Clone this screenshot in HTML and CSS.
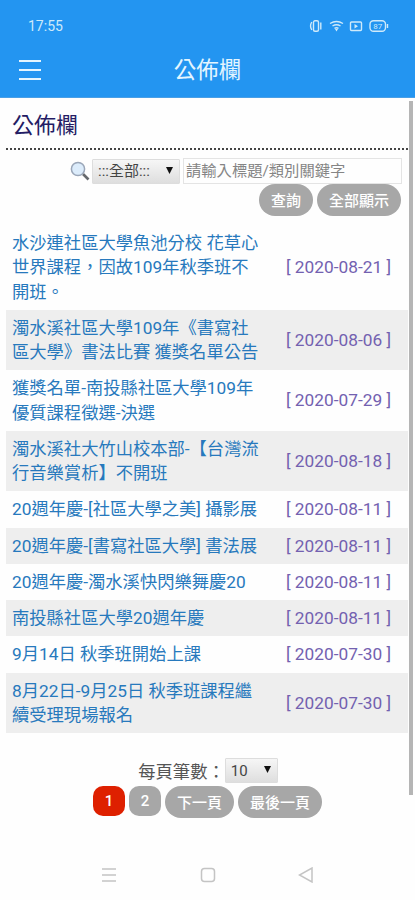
FILE: index.html
```html
<!DOCTYPE html>
<html lang="zh-Hant">
<head>
<meta charset="UTF-8">
<meta name="viewport" content="width=device-width, initial-scale=1.0">
<title>公佈欄</title>
<link rel="stylesheet" href="styles.css">
</head>
<body>
<header class="top">
  <div class="status">
    <span class="time">17:55</span>
    <svg class="status-icons" width="82" height="16" viewBox="0 0 82 16">
      <g fill="none" stroke="#cfeafa" stroke-width="1.400">
        <rect x="4.500" y="2.800" width="5" height="10.400" rx="1.500"/>
        <path d="M2.800 4q-2.500 4 0 8M11.800 4.500v7"/>
        <path d="M21 5.500q6.500-4 13 0M23.500 8q4-2.500 8 0M25.500 10.300q2-1.200 4 0"/>
        <rect x="41.500" y="4" width="11" height="8.500" rx="1"/>
        <rect x="61" y="2.800" width="15.500" height="10.400" rx="3.500"/>
        <path d="M78.500 6v4"/>
      </g>
      <path d="M26 11h3l-1.500 2.500zM45.500 6l3.500 2.300-3.500 2.300z" fill="#cfeafa"/>
      <text x="68.700" y="11" class="battery">87</text>
    </svg>
  </div>
  <div class="titlebar">
    <svg class="menu" width="22" height="22" viewBox="0 0 22 22">
      <path d="M0 2h22M0 11h22M0 20h22" stroke="#e4f5ff" stroke-width="2"/>
    </svg>
    <h1>公佈欄</h1>
  </div>
</header>

<main class="content">
  <h2>公佈欄</h2>
  <form class="search">
    <svg class="glass" width="20" height="20" viewBox="0 0 20 20">
      <path d="M13 13l5.500 5.500" stroke="#66696d" stroke-width="2.600"/>
      <circle cx="8" cy="8" r="6.600" fill="#dcecfb" stroke="#9aa6b8" stroke-width="1.500"/>
    </svg>
    <select class="kind"><option>:::全部:::</option></select>
    <input type="text" class="keyword" placeholder="請輸入標題/類別關鍵字">
  </form>
  <div class="actions">
    <button type="button" class="btn">查詢</button>
    <button type="button" class="btn">全部顯示</button>
  </div>

  <ul class="news">
    <li><a href="#">水沙連社區大學魚池分校 花草心<br>世界課程，因故109年秋季班不<br>開班。</a><span class="date">[ 2020-08-21 ]</span></li>
    <li><a href="#">濁水溪社區大學109年《書寫社<br>區大學》書法比賽 獲獎名單公告</a><span class="date">[ 2020-08-06 ]</span></li>
    <li><a href="#">獲獎名單-南投縣社區大學109年<br>優質課程徵選-決選</a><span class="date">[ 2020-07-29 ]</span></li>
    <li><a href="#">濁水溪社大竹山校本部-【台灣流<br>行音樂賞析】不開班</a><span class="date">[ 2020-08-18 ]</span></li>
    <li><a href="#">20週年慶-[社區大學之美] 攝影展</a><span class="date">[ 2020-08-11 ]</span></li>
    <li><a href="#">20週年慶-[書寫社區大學] 書法展</a><span class="date">[ 2020-08-11 ]</span></li>
    <li><a href="#">20週年慶-濁水溪快閃樂舞慶20</a><span class="date">[ 2020-08-11 ]</span></li>
    <li><a href="#">南投縣社區大學20週年慶</a><span class="date">[ 2020-08-11 ]</span></li>
    <li><a href="#">9月14日 秋季班開始上課</a><span class="date">[ 2020-07-30 ]</span></li>
    <li><a href="#">8月22日-9月25日 秋季班課程繼<br>續受理現場報名</a><span class="date">[ 2020-07-30 ]</span></li>
  </ul>

  <div class="per-page">
    <label for="count">每頁筆數：</label>
    <select id="count" class="count"><option>10</option></select>
  </div>
  <div class="pages">
    <button type="button" class="num active">1</button>
    <button type="button" class="num">2</button>
    <button type="button" class="btn">下一頁</button>
    <button type="button" class="btn">最後一頁</button>
  </div>
  <div class="scrollbar"></div>
</main>

<footer class="navbar">
  <svg width="16" height="16" viewBox="0 0 16 16"><path d="M1 2h14M1 8h14M1 14h14"/></svg>
  <svg width="16" height="16" viewBox="0 0 16 16"><rect x="1.500" y="1.500" width="13" height="13" rx="3"/></svg>
  <svg width="16" height="16" viewBox="0 0 16 16"><path d="M14 1v14L1.500 8z"/></svg>
</footer>
</body>
</html>
```
FILE: styles.css
```css
* {
  box-sizing: border-box;
}
body {
  margin: 0;
  height: 900px;
  display: flex;
  flex-direction: column;
  background: #fefefe;
  font-family: Roboto, "Noto Sans CJK TC", sans-serif;
  overflow: hidden;
}

/* header */
.top {
  height: 98px;
  background: #2395f1;
  color: #e4f5ff;
  border-bottom: 1px solid #4a9fe6;
}
.status {
  height: 40px;
  padding: 12px 24px 0 28px;
  display: flex;
  justify-content: space-between;
  align-items: center;
}
.time {
  font-size: 14px;
  color: #cfeafa;
}
.battery {
  font-size: 8px;
  fill: #cfeafa;
  text-anchor: middle;
}
.titlebar {
  height: 58px;
  padding: 1px 19px 0;
  display: grid;
  grid-template-columns: 22px 1fr 22px;
  align-items: center;
}
.titlebar h1 {
  margin: 0;
  font-size: 22.5px;
  line-height: 30px;
  font-weight: 400;
  text-align: center;
}

/* content */
.content {
  position: relative;
  flex: 1;
  padding: 0 7px 0 6px;
}
h2 {
  margin: 0;
  height: 52px;
  padding: 13px 0 0 6px;
  border-bottom: 2px dotted #444;
  font-size: 22px;
  line-height: 30px;
  font-weight: 400;
  color: #241c64;
}
.search {
  display: flex;
  align-items: center;
  justify-content: flex-end;
  height: 34px;
  padding: 8px 6px 0 0;
}
.glass {
  margin-right: 2px;
}
select {
  appearance: none;
  border: 1px solid #ddd;
  border-radius: 1px;
  color: #444;
  font-family: inherit;
  font-size: 15px;
  height: 25px;
  padding: 0 5px;
  background: url("data:image/svg+xml,%3Csvg xmlns='http://www.w3.org/2000/svg' width='7' height='8'%3E%3Cpath d='M0 0h7L3.500 7z' fill='%23111'/%3E%3C/svg%3E") right 6px top 7px no-repeat, linear-gradient(#f6f6f6, #dedede);
}
.kind {
  width: 88px;
  margin-right: 3px;
}
.keyword {
  width: 219px;
  height: 26px;
  padding: 0 2px;
  border: 1px solid #e4e4e4;
  background: #fefefe;
  font-family: inherit;
  font-size: 15.3px;
}
.keyword::placeholder {
  color: #858585;
}
.actions {
  display: flex;
  justify-content: flex-end;
  gap: 4px;
  padding-right: 7px;
}
.btn,
.num {
  border: 0;
  background: #a7a7a7;
  color: #fff;
  font-family: inherit;
  font-weight: 500;
  font-size: 15px;
  line-height: 22px;
}
.btn {
  height: 32px;
  padding: 1px 12px 0;
  border-radius: 16px;
}

/* news list */
.news {
  list-style: none;
  margin: 9px 0 0;
  padding: 0;
}
.news li {
  display: flex;
  justify-content: space-between;
  align-items: center;
  padding: 6px 17px 6px 6px;
  font-size: 17.3px;
  line-height: 24.25px;
  white-space: nowrap;
}
.news li:nth-child(even) {
  background: #eee;
}
.news a {
  color: #2779bd;
  text-decoration: none;
}
.date {
  color: #7361b0;
}

/* paging */
.per-page {
  display: flex;
  justify-content: center;
  align-items: center;
  margin: 25px 0 0 2px;
  height: 25px;
  font-size: 17.3px;
  color: #555;
}
.count {
  width: 53px;
}
.pages {
  display: flex;
  justify-content: center;
  gap: 4px;
  margin: 3px 0 0 1px;
}
.num {
  width: 32px;
  height: 30px;
  padding: 0;
  border-radius: 10px;
}
.num.active {
  background: #de2000;
}
.scrollbar {
  position: absolute;
  top: 3px;
  right: 2px;
  width: 4px;
  height: 694px;
  background: #b5b5b5;
}

/* phone buttons */
.navbar {
  display: flex;
  justify-content: space-between;
  padding: 0 101px;
  height: 33px;
}
.navbar svg {
  fill: none;
  stroke: #c4c4c4;
  stroke-width: 1.5;
}
```
